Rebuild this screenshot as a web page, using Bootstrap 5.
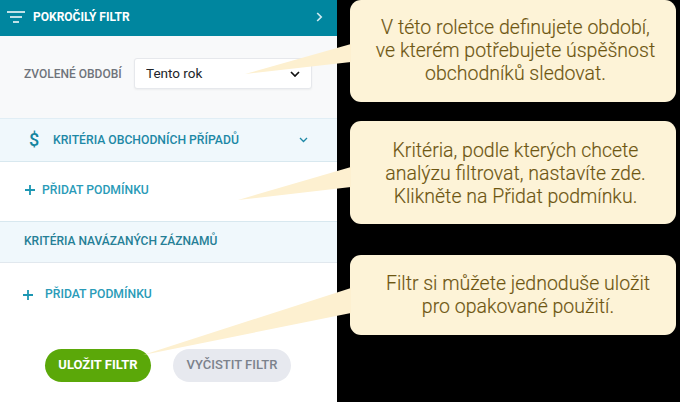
<!DOCTYPE html>
<html lang="cs">
<head>
<meta charset="utf-8">
<title>Pokročilý filtr</title>
<link href="https://cdn.jsdelivr.net/npm/bootstrap@5.3.0/dist/css/bootstrap.min.css" rel="stylesheet">
<style>
html,body{margin:0;background:#000;}
body{width:680px;height:402px;overflow:hidden;font-family:Roboto,"Liberation Sans",sans-serif;}
.stage{position:relative;width:680px;height:402px;}
.panel{width:337px;height:402px;background:#fff;flex:none;}
.panel-head{height:36px;background:#00869f;color:#fff;font-size:12px;font-weight:700;padding:0 14px 3px 7px;}
.period{height:82px;background:#f8f9fa;padding:0 25px 7px 24px;}
.period-label{font-size:12px;font-weight:500;color:#6f747b;width:110px;flex:none;}
.period-select{height:31px;font-size:13.5px;padding:0 30px 0 11px;border:1px solid #e6e8ec;border-radius:3px;box-shadow:0 1px 2px rgba(0,0,0,.05);color:#212529;font-family:Roboto,sans-serif;background-image:url("data:image/svg+xml,%3csvg xmlns='http://www.w3.org/2000/svg' viewBox='0 0 10 6'%3e%3cpath d='M1 1l4 4 4-4' fill='none' stroke='%23111' stroke-width='1.7'/%3e%3c/svg%3e");background-size:10px 6px;background-position:right 11px center;}
.crit-a{height:44px;background:#f0f8fc;border-top:1px solid #e1eef5;border-bottom:1px solid #d8e8ef;padding:0 29px 0 29px;color:#1d88a6;font-size:12.2px;font-weight:500;}
.dollar{width:24px;flex:none;font-size:18px;font-weight:500;color:#14859f;line-height:1;}
.crit-b{height:42px;background:#f0f8fc;border-top:1px solid #d8e8ef;border-bottom:1px solid #e1e8ee;padding:0 24px 2px;color:#257f96;font-size:12px;font-weight:500;}
.add-a{height:59px;padding:0 0 3px 25px;gap:7px;}
.add-b{height:63px;padding:0 0 0 23px;gap:12px;}
.add-text{font-size:12.2px;font-weight:500;color:#2a9bb8;}
.actions{height:78px;padding:0 0 0 45px;gap:22px;}
.btn-save,.btn-clear{height:33px;border-radius:17px;border:0;font-size:13px;font-weight:700;padding:0;display:flex;align-items:center;justify-content:center;}
.btn-save{width:106px;background:#5ba809;color:#fff;}
.btn-save:hover{background:#5ba809;color:#fff;}
.btn-clear{width:118px;background:#e7e9ef;color:#7c828c;font-weight:500;}
.notes{width:326px;margin-left:13px;}
.note{background:#fdf3d7;border-radius:11px;color:#6d5612;font-size:19.5px;font-weight:300;line-height:23px;text-align:center;-webkit-text-stroke:.15px #6d5612;}
.note-1{height:102px;padding:16px 0 0 5px;margin-bottom:19px;}
.note-2{height:103px;padding:18px 0 0 5px;margin-bottom:31px;}
.note-3{height:80px;padding:17px 0 0 10px;}
.tails{position:absolute;left:0;top:0;pointer-events:none;}
</style>
</head>
<body>
<div class="stage d-flex">
  <div class="panel">
    <div class="panel-head d-flex align-items-center">
      <svg width="18" height="12" viewBox="0 0 18 12" class="me-2"><path d="M0 1h18M3 6h12M6 11h6" stroke="#fff" stroke-width="1.6" fill="none"/></svg>
      <span class="flex-grow-1">POKROČILÝ FILTR</span>
      <svg width="7" height="10" viewBox="0 0 7 10"><path d="M1.2 1l4 4-4 4" stroke="#cfeaf0" stroke-width="1.7" fill="none"/></svg>
    </div>
    <div class="period d-flex align-items-center">
      <span class="period-label">ZVOLENÉ OBDOBÍ</span>
      <select class="form-select period-select"><option>Tento rok</option></select>
    </div>
    <div class="crit-a d-flex align-items-center">
      <span class="dollar">$</span>
      <span class="flex-grow-1">KRITÉRIA OBCHODNÍCH PŘÍPADŮ</span>
      <svg width="9" height="6" viewBox="0 0 9 6"><path d="M1 1l3.5 3.5L8 1" stroke="#1d88a6" stroke-width="1.3" fill="none"/></svg>
    </div>
    <div class="add-a d-flex align-items-center">
      <svg width="10" height="10" viewBox="0 0 10 10"><path d="M5 0v10M0 5h10" stroke="#1c97b3" stroke-width="1.8"/></svg>
      <span class="add-text">PŘIDAT PODMÍNKU</span>
    </div>
    <div class="crit-b d-flex align-items-center">KRITÉRIA NAVÁZANÝCH ZÁZNAMŮ</div>
    <div class="add-b d-flex align-items-center">
      <svg width="10" height="10" viewBox="0 0 10 10"><path d="M5 0v10M0 5h10" stroke="#1c97b3" stroke-width="1.8"/></svg>
      <span class="add-text">PŘIDAT PODMÍNKU</span>
    </div>
    <div class="actions d-flex align-items-center">
      <button type="button" class="btn btn-save">ULOŽIT FILTR</button>
      <button type="button" class="btn btn-clear">VYČISTIT FILTR</button>
    </div>
  </div>
  <div class="notes">
    <div class="note note-1">V této roletce definujete období,<br>ve kterém potřebujete úspěšnost<br>obchodníků sledovat.</div>
    <div class="note note-2">Kritéria, podle kterých chcete<br>analýzu filtrovat, nastavíte zde.<br>Klikněte na Přidat podmínku.</div>
    <div class="note note-3">Filtr si můžete jednoduše uložit<br>pro opakované použití.</div>
  </div>
  <svg class="tails" width="680" height="402" viewBox="0 0 680 402">
    <polygon points="351,44 351,62 245,74" fill="#fdf0d0"/>
    <polygon points="351,167 351,187 238,200" fill="#fdf0d0"/>
    <polygon points="351,288 351,313 143,355" fill="#fdf0d0"/>
  </svg>
</div>
</body>
</html>
